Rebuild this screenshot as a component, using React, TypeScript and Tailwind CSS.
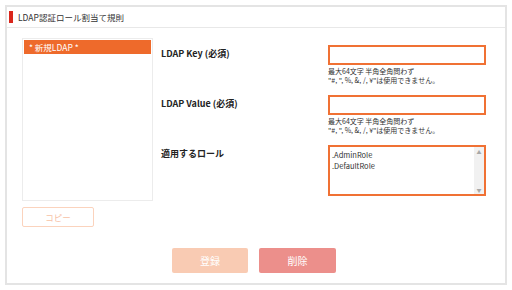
const JP = { fontFamily: '"Noto Sans CJK JP", "Noto Sans", sans-serif' }

function Field({ label, children }: { label: string; children: React.ReactNode }) {
  return (
    <div className="flex">
      <div className="w-[167px] pt-[3px] text-[9px] font-bold leading-[12px] text-[#222]">{label}</div>
      <div className="flex-1">{children}</div>
    </div>
  )
}

function Help() {
  return (
    <div className="mt-[2px] text-[7px] leading-[9px] text-[#333] whitespace-nowrap">
      <div>最大64文字 半角全角問わず</div>
      <div>"#, ", %, &amp;, /, ¥"は使用できません。</div>
    </div>
  )
}

export default function App() {
  return (
    <div className="w-[512px] h-[290px] bg-white p-[5px]" style={JP}>
      <div className="w-[502px] h-[280px] border-2 border-[#e4e4e4] flex flex-col">
        <div className="h-[21px] flex items-center border-b border-[#e8e8e8] pl-[2px]">
          <span className="w-[4px] h-[12px] bg-[#d9261c] mr-[5px]" />
          <span className="text-[8.5px] text-[#333]">LDAP認証ロール割当て規則</span>
        </div>

        <div className="flex pl-[15px] pt-[10px]">
          <div className="w-[131px] shrink-0">
            <div className="h-[163px] border border-[#ececec] p-[1px]">
              <div className="h-[14px] bg-[#ee6a2b] text-white text-[8.5px] leading-[14px] pl-[5px]">* 新規LDAP *</div>
            </div>
            <button className="mt-[6px] w-[72px] h-[20px] border border-[#fbd3bd] rounded-[2px] text-[8.5px] text-[#f7c2a6] bg-white">
              コピー
            </button>
          </div>

          <div className="ml-[8px] w-[326px] pt-[7px] flex flex-col gap-[10px]">
            <Field label="LDAP Key (必須)">
              <div className="w-[158px] h-[20px] border-2 border-[#f07134]" />
              <Help />
            </Field>
            <Field label="LDAP Value (必須)">
              <div className="w-[158px] h-[20px] border-2 border-[#f07134]" />
              <Help />
            </Field>
            <Field label="適用するロール">
              <div className="w-[158px] h-[51px] border-2 border-[#f07134] flex">
                <div className="flex-1 pl-[2px] pt-[2px] text-[7.5px] leading-[11px] text-[#333]">
                  <div>.AdminRole</div>
                  <div>.DefaultRole</div>
                </div>
                <div className="w-[10px] bg-[#f1f1f1] flex flex-col justify-between items-center py-[1px] text-[5px] text-[#a8a8a8]">
                  <span>▲</span>
                  <span>▼</span>
                </div>
              </div>
            </Field>
          </div>
        </div>

        <div className="flex justify-center gap-[11px] mt-[auto] mb-[10px] pr-[4px]">
          <button className="w-[76px] h-[25px] rounded-[2px] bg-[#f9cbb3] text-white text-[10px]">登録</button>
          <button className="w-[77px] h-[25px] rounded-[2px] bg-[#ec8f8b] text-white text-[10px]">削除</button>
        </div>
      </div>
    </div>
  )
}
